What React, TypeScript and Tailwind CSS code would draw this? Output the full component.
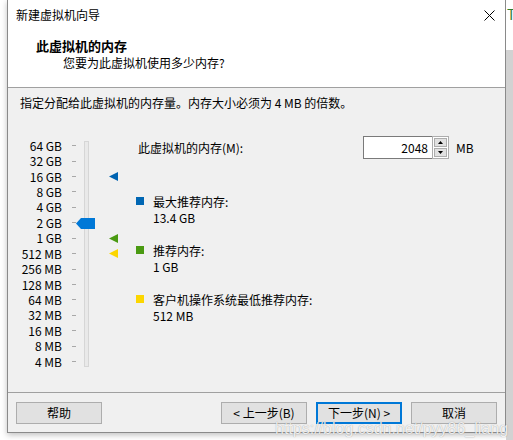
const SCALE = ['64 GB', '32 GB', '16 GB', '8 GB', '4 GB', '2 GB', '1 GB', '512 MB', '256 MB', '128 MB', '64 MB', '32 MB', '16 MB', '8 MB', '4 MB']

// row index -> marker colour on the right of the slider
const MARKERS: Record<number, string> = { 2: '#0063b1', 6: '#4a9a12', 7: '#fcd600' }

function Tri({ color }: { color: string }) {
  return (
    <svg width="9" height="9" viewBox="0 0 9 9">
      <polygon points="0,4.5 9,0 9,9" fill={color} />
    </svg>
  )
}

function Legend({ color, label, value }: { color: string; label: string; value: string }) {
  return (
    <div className="flex items-start">
      <div className="w-[8px] h-[8px] mt-[3px] mr-[9px] shrink-0" style={{ backgroundColor: color }} />
      <div className="leading-[16px]">
        <div>{label}</div>
        <div>{value}</div>
      </div>
    </div>
  )
}

function Btn({ children, primary }: { children: React.ReactNode; primary?: boolean }) {
  return (
    <button
      className={`w-[86px] h-[22px] bg-[#e1e1e1] text-[12px] leading-none text-black ${
        primary ? 'border-2 border-[#0078d7]' : 'border border-[#adadad]'
      }`}
    >
      {children}
    </button>
  )
}

export default function App() {
  return (
    <div className="relative w-[513px] h-[440px] overflow-hidden bg-white flex font-['Noto_Sans_CJK_SC',sans-serif] text-[12px] text-black">
      <div className="ml-[7px] w-[499px] h-[433px] flex flex-col border border-t-0 border-[#8a8a8a] bg-[#f0f0f0] shadow-[0_2px_6px_rgba(0,0,0,0.25)]">

        {/* title bar + header */}
        <div className="bg-white">
          <div className="h-[30px] flex items-center justify-between pl-[8px] pr-[10px]">
            <span>新建虚拟机向导</span>
            <svg width="11" height="11" viewBox="0 0 11 11">
              <path d="M0.5 0.5 L10.5 10.5 M10.5 0.5 L0.5 10.5" stroke="#000" strokeWidth="1" />
            </svg>
          </div>
          <div className="h-[57px] pt-[7px]">
            <div className="pl-[28px] text-[13px] font-bold leading-[18px]">此虚拟机的内存</div>
            <div className="pl-[55px] leading-[16px]">您要为此虚拟机使用多少内存?</div>
          </div>
        </div>
        <div className="h-px bg-[#a0a0a0]" />

        {/* body */}
        <div className="h-[304px] flex flex-col">
          <p className="pl-[12px] pt-[7px] leading-[16px]">指定分配给此虚拟机的内存量。内存大小必须为 4 MB 的倍数。</p>

          <div className="flex items-start mt-[25px]">
            {/* slider */}
            <div className="flex pt-[2px]">
              <div className="w-[54px] flex flex-col">
                {SCALE.map((s) => (
                  <div key={s} className="h-[15.43px] flex items-center justify-end leading-none">{s}</div>
                ))}
              </div>
              <div className="ml-[10px] w-[4px] flex flex-col">
                {SCALE.map((s) => (
                  <div key={s} className="h-[15.43px] flex items-center">
                    <div className="w-[4px] h-px bg-[#a8a8a8]" />
                  </div>
                ))}
              </div>
              <div className="relative ml-[8px] mt-[3px] w-[5px] h-[226px] border border-[#d6d6d6] bg-[#e9e9e9]">
                <svg className="absolute left-[-9px] top-[76px]" width="19" height="11" viewBox="0 0 19 11">
                  <polygon points="0,5.5 5,0 19,0 19,11 5,11" fill="#0078d7" />
                </svg>
              </div>
              <div className="ml-[20px] w-[9px] flex flex-col">
                {SCALE.map((s, i) => (
                  <div key={s} className="h-[15.43px] flex items-center">
                    {MARKERS[i] && <Tri color={MARKERS[i]} />}
                  </div>
                ))}
              </div>
            </div>

            {/* right side */}
            <div className="ml-[18px] flex flex-col">
              <div className="h-[23px] flex items-center">
                <span className="w-[227px] pl-[2px]">此虚拟机的内存(M):</span>
                <div className="flex h-[23px]">
                  <div className="w-[69px] h-[23px] border border-[#7a7a7a] border-r-0 bg-white flex items-center justify-end pr-[4px]">2048</div>
                  <div className="w-[17px] h-[23px] border border-[#adadad] bg-white flex flex-col justify-center gap-px px-px">
                    <div className="h-[9px] bg-[#e1e1e1] border border-[#adadad] flex items-center justify-center">
                      <svg width="5" height="3" viewBox="0 0 5 3"><polygon points="2.5,0 5,3 0,3" fill="#000" /></svg>
                    </div>
                    <div className="h-[9px] bg-[#e1e1e1] border border-[#adadad] flex items-center justify-center">
                      <svg width="5" height="3" viewBox="0 0 5 3"><polygon points="0,0 5,0 2.5,3" fill="#000" /></svg>
                    </div>
                  </div>
                </div>
                <span className="ml-[7px]">MB</span>
              </div>

              <div className="mt-[35px] flex flex-col gap-[17px]">
                <Legend color="#0066b3" label="最大推荐内存:" value="13.4 GB" />
                <Legend color="#4a9a12" label="推荐内存:" value="1 GB" />
                <Legend color="#fcd600" label="客户机操作系统最低推荐内存:" value="512 MB" />
              </div>
            </div>
          </div>
        </div>

        <div className="h-px bg-[#a0a0a0]" />

        {/* footer */}
        <div className="h-[39px] pt-[9px] px-[8px] flex items-start">
          <Btn>帮助</Btn>
          <div className="ml-auto flex gap-[9px]">
            <Btn>&lt; 上一步(B)</Btn>
            <Btn primary>下一步(N) &gt;</Btn>
            <Btn>取消</Btn>
          </div>
        </div>
      </div>

      {/* what shows beside the dialog */}
      <div className="w-[7px] flex flex-col overflow-hidden">
        <div className="h-[50px] bg-white pl-[1px] text-[#2e7d32] text-[14px] leading-[28px]">T</div>
        <div className="flex-1 bg-[#d2d2d2]" />
      </div>

      {/* watermark */}
      <div className="absolute left-[275px] top-[417px] text-[16px] font-['Liberation_Sans',sans-serif] text-white/85 [text-shadow:0_0_1px_rgba(0,0,0,0.4)] whitespace-nowrap">
        https://blog.csdn.net/pyy86_liang
      </div>
    </div>
  )
}
